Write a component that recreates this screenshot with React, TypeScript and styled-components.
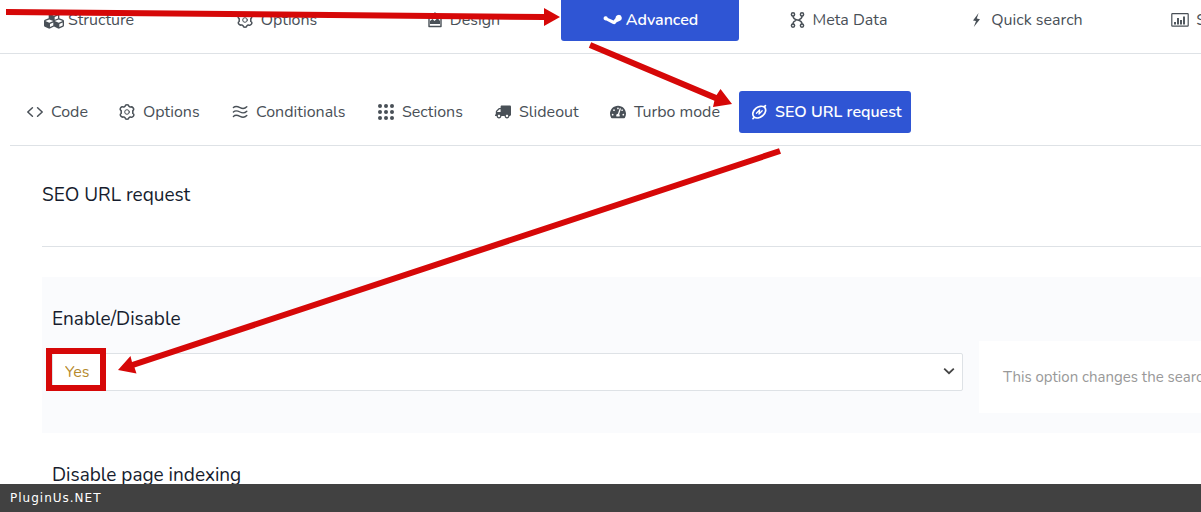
import React from "react";
import styled, { createGlobalStyle, css } from "styled-components";
import { FaCubes, FaTruck, FaTachometerAlt } from "react-icons/fa";

const GlobalStyle = createGlobalStyle`
  *, *::before, *::after { box-sizing: border-box; }
  body {
    margin: 0;
    background: #fff;
    color: #495057;
    font-family: Nunito, "Open Sans", sans-serif;
    font-size: 16px;
    line-height: 24px;
  }
`;

const Page = styled.div`
  position: relative;
  display: flex;
  flex-direction: column;
  height: 100vh;
  overflow: hidden;
`;

const Content = styled.main`
  flex: 1;
  min-height: 0;
  overflow: hidden;
`;

const MainNav = styled.nav`
  display: flex;
  gap: 9px;
  height: 54px;
  border-bottom: 1px solid #dee2e6;
  overflow: hidden;
`;

const SubNav = styled.nav`
  display: flex;
  gap: 10px;
  margin-left: 10px;
  padding: 37px 0 12px 5px;
  border-bottom: 1px solid #dee2e6;
`;

const activeTab = css`
  background: #2f55d4;
  color: #fff;
  font-weight: 600;
`;

const Tab = styled.button<{ $active?: boolean }>`
  display: flex;
  align-items: center;
  gap: 8px;
  border: 0;
  background: none;
  color: #495057;
  font: inherit;
  white-space: nowrap;
  cursor: pointer;
  ${(p) => p.$active && activeTab}

  svg { flex: none; }
`;

const MainTab = styled(Tab)`
  flex: 0 0 178px;
  justify-content: center;
  gap: 4px;
  height: 41px;
  padding: 0 0 2px;
  border-radius: 0 0 3px 3px;
`;

const SubTab = styled(Tab)<{ $width: number }>`
  flex: 0 0 ${(p) => p.$width}px;
  height: 42px;
  padding: 0 0 0 12px;
  border-radius: 3px;
`;

const Section = styled.section`
  margin-left: 42px;
`;

const SectionTitle = styled.h1`
  margin: 0;
  padding: 37px 0 39px;
  border-bottom: 1px solid #dee2e6;
  color: #161c2d;
  font-size: 19px;
  font-weight: 400;
  line-height: 24px;
`;

const Options = styled.div`
  margin-top: 30px;
`;

const OptionCard = styled.div<{ $shaded?: boolean }>`
  padding: 30px 0 20px 10px;
  background: ${(p) => (p.$shaded ? "#fafbfd" : "#fff")};
`;

const OptionLabel = styled.label`
  display: block;
  color: #161c2d;
  font-size: 19px;
  line-height: 24px;
`;

const OptionRow = styled.div`
  display: grid;
  grid-template-columns: 911px 1fr;
  align-items: start;
  gap: 16px;
  padding-top: 10px;
`;

const SelectBox = styled.div`
  position: relative;
  display: flex;
  margin-top: 12px;

  svg {
    position: absolute;
    right: 8px;
    top: 12px;
    pointer-events: none;
  }
`;

const Select = styled.select`
  appearance: none;
  width: 100%;
  height: 38px;
  padding: 0 12px;
  border: 1px solid #dee2e6;
  border-radius: 2px;
  background: #fff;
  color: #b58a2c;
  font: inherit;
`;

const Help = styled.p`
  margin: 0;
  padding: 24px;
  overflow: hidden;
  background: #fff;
  color: #999;
  font-size: 15px;
  white-space: nowrap;
`;

const Footer = styled.footer`
  flex: none;
  padding: 2px 10px;
  height: 28px;
  background: #414141;
  color: #fff;
  font-family: "DejaVu Sans", sans-serif;
  font-size: 12px;
  letter-spacing: 1px;
`;

const Annotations = styled.svg`
  position: absolute;
  left: 0;
  top: 0;
  pointer-events: none;
`;

type LineIconProps = { children: React.ReactNode; width?: number; box?: string; stroke?: number };

const LineIcon = ({ children, width = 16, box = "0 0 16 16", stroke = 1.4 }: LineIconProps) => (
  <svg width={width} height={16} viewBox={box} fill="none" stroke="currentColor" strokeWidth={stroke} strokeLinecap="round" strokeLinejoin="round" aria-hidden="true">
    {children}
  </svg>
);

const GearIcon = ({ wide }: { wide?: boolean }) => (
  <LineIcon width={wide ? 22 : 16} box={wide ? "-2 0 22 16" : "0 0 16 16"} stroke={1.5}>
    <path d="M6 2.4 Q6.2.8 8 .8 T10 2.4 L11.2 3.1 Q13 2.4 14.2 4 T13.8 6.6 V9.4 Q15.6 10.4 14.4 12.2 T11.2 12.9 L10 13.6 Q9.8 15.2 8 15.2 T6 13.6 L4.8 12.9 Q3 13.6 1.8 12 T2.2 9.4 V6.6 Q.4 5.6 1.6 3.8 T4.8 3.1 Z" />
    <circle cx="8" cy="8" r="2.3" strokeWidth="1" />
  </LineIcon>
);

const PictureIcon = () => (
  <LineIcon width={20} box="-2 0 20 16">
    <path d="M1 4 H13 V14.5 H1 Z M5 4 L7 1 L9 4" />
    <path d="M2 12 V9 L4.5 7 L6.5 9 L9.5 6 L12 9 V12 Z" fill="currentColor" stroke="none" />
  </LineIcon>
);

const SteamIcon = () => (
  <svg width="20" height="16" viewBox="-1 0 20 16" fill="currentColor" aria-hidden="true">
    <path d="M3 4.2 A2.1 2.1 0 0 0 .6 6.4 A2.2 2.2 0 0 0 3.4 8.4 L9.6 11.8 Q11.6 13 12.8 11.2 L13.6 10.2 L16.4 9 A3.1 3.1 0 1 0 12.6 6 L10.6 8.4 L4.8 6 A2.2 2.2 0 0 0 3 4.2 Z" />
  </svg>
);

const NodesIcon = () => (
  <LineIcon width={22} box="-3 0 22 16" stroke={1.5}>
    <circle cx="3" cy="2.4" r="1.6" />
    <circle cx="12" cy="2.4" r="1.6" />
    <circle cx="3" cy="13.6" r="1.6" />
    <circle cx="12" cy="13.6" r="1.6" />
    <path d="M3 4 C3 7 5 7.4 7.5 8 C10 8.6 12 9 12 12 M12 4 C12 6.2 10.6 7 9.4 7.4 M3 12 C3 9.8 4.4 9 5.6 8.6" />
  </LineIcon>
);

const BoltIcon = () => (
  <svg width="22" height="16" viewBox="-7 0 22 16" fill="currentColor" aria-hidden="true">
    <path d="M6.6 1 L1 8.4 L4 9 L1.8 15 L8 7.2 L4.8 6.6 Z" />
  </svg>
);

const ChartIcon = () => (
  <LineIcon width={24} box="-3 0 24 16" stroke={1.2}>
    <rect x=".8" y="1.6" width="16.4" height="12.6" rx=".6" />
    <path d="M4 10v2.4M7 6v6.4M10 8v4.4M13 4.6v7.8" strokeWidth="1.9" strokeLinecap="butt" />
  </LineIcon>
);

const CodeIcon = () => (
  <LineIcon stroke={1.5}>
    <path d="M5.4 3.8 L.8 8 L5.4 12.2 M10.6 3.8 L15.2 8 L10.6 12.2" />
  </LineIcon>
);

const WavesIcon = () => (
  <LineIcon>
    {[3, 7.4, 11.8].map((y) => (
      <path key={y} d={`M1.4 ${y + 0.6} C3.4 ${y - 1.4} 5.4 ${y - 0.8} 8 ${y + 0.6} S12.6 ${y + 2} 14.8 ${y - 0.2}`} />
    ))}
  </LineIcon>
);

const GridIcon = () => (
  <svg width="16" height="16" viewBox="0 0 16 16" fill="currentColor" aria-hidden="true">
    {[2, 8, 14].map((y) => [2, 8, 14].map((x) => <circle key={`${x}-${y}`} cx={x} cy={y} r="2" />))}
  </svg>
);

const LeafIcon = () => (
  <LineIcon stroke={1.7}>
    <path d="M3.4 13.2 C.8 11.4 1.4 6.8 5 4.2 C7.6 2.2 11.4 1.6 13.2 3 C15.6 4.8 15 9.2 11.6 11.8 C8.8 14 5.2 14.6 3.4 13.2 Z M13.2 3 L14.4 1.6 M2 14.6 L3.4 13.2" />
    <path d="M5.4 9.2 L8.6 6 L8 10 L11.2 6.8" strokeWidth="1.3" />
  </LineIcon>
);

const ChevronIcon = () => (
  <svg width="12" height="12" viewBox="0 0 12 12" fill="none" stroke="#444" strokeWidth="1.8" aria-hidden="true">
    <path d="M1.2 3.6 L6 8.2 L10.8 3.6" />
  </svg>
);

const mainTabs = [
  { label: "Structure", icon: <FaCubes size={20} /> },
  { label: "Options", icon: <GearIcon wide /> },
  { label: "Design", icon: <PictureIcon /> },
  { label: "Advanced", icon: <SteamIcon />, active: true },
  { label: "Meta Data", icon: <NodesIcon /> },
  { label: "Quick search", icon: <BoltIcon /> },
  { label: "Statistic", icon: <ChartIcon /> },
];

const subTabs = [
  { label: "Code", width: 82, icon: <CodeIcon /> },
  { label: "Options", width: 103, icon: <GearIcon /> },
  { label: "Conditionals", width: 136, icon: <WavesIcon /> },
  { label: "Sections", width: 107, icon: <GridIcon /> },
  { label: "Slideout", width: 105, icon: <FaTruck size={16} transform="scale(-1 1)" /> },
  { label: "Turbo mode", width: 131, icon: <FaTachometerAlt size={16} /> },
  { label: "SEO URL request", width: 172, icon: <LeafIcon />, active: true },
];

export default function App() {
  return (
    <>
      <GlobalStyle />
      <Page>
        <Content>
          <MainNav>
            {mainTabs.map((t) => (
              <MainTab key={t.label} $active={t.active}>
                {t.icon}
                {t.label}
              </MainTab>
            ))}
          </MainNav>
          <SubNav>
            {subTabs.map((t) => (
              <SubTab key={t.label} $active={t.active} $width={t.width}>
                {t.icon}
                {t.label}
              </SubTab>
            ))}
          </SubNav>
          <Section>
            <SectionTitle>SEO URL request</SectionTitle>
            <Options>
              <OptionCard $shaded>
                <OptionLabel htmlFor="enable">Enable/Disable</OptionLabel>
                <OptionRow>
                  <SelectBox>
                    <Select id="enable" defaultValue="yes">
                      <option value="yes">Yes</option>
                      <option value="no">No</option>
                    </Select>
                    <ChevronIcon />
                  </SelectBox>
                  <Help>This option changes the search</Help>
                </OptionRow>
              </OptionCard>
              <OptionCard>
                <OptionLabel as="div">Disable page indexing</OptionLabel>
              </OptionCard>
            </Options>
          </Section>
        </Content>
        <Footer>PluginUs.NET</Footer>
        <Annotations width="1201" height="512" viewBox="0 0 1201 512" fill="#d60808" aria-hidden="true">
          <path d="M6 9 L544 14 V8 L560 17 L544 26 V20 L6 15 Z" />
          <path d="M591.2 42.2 L716.6 95 L720.5 89 L732 104 L713 107 L714.4 100.8 L588.8 47.8 Z" />
          <path d="M779 148.2 L132 362 L130.5 356 L118 370 L136.5 373.5 L134.5 367.6 L781 153.8 Z" />
          <rect x="49" y="351" width="54" height="37" fill="none" stroke="#d60808" strokeWidth="6" />
        </Annotations>
      </Page>
    </>
  );
}
